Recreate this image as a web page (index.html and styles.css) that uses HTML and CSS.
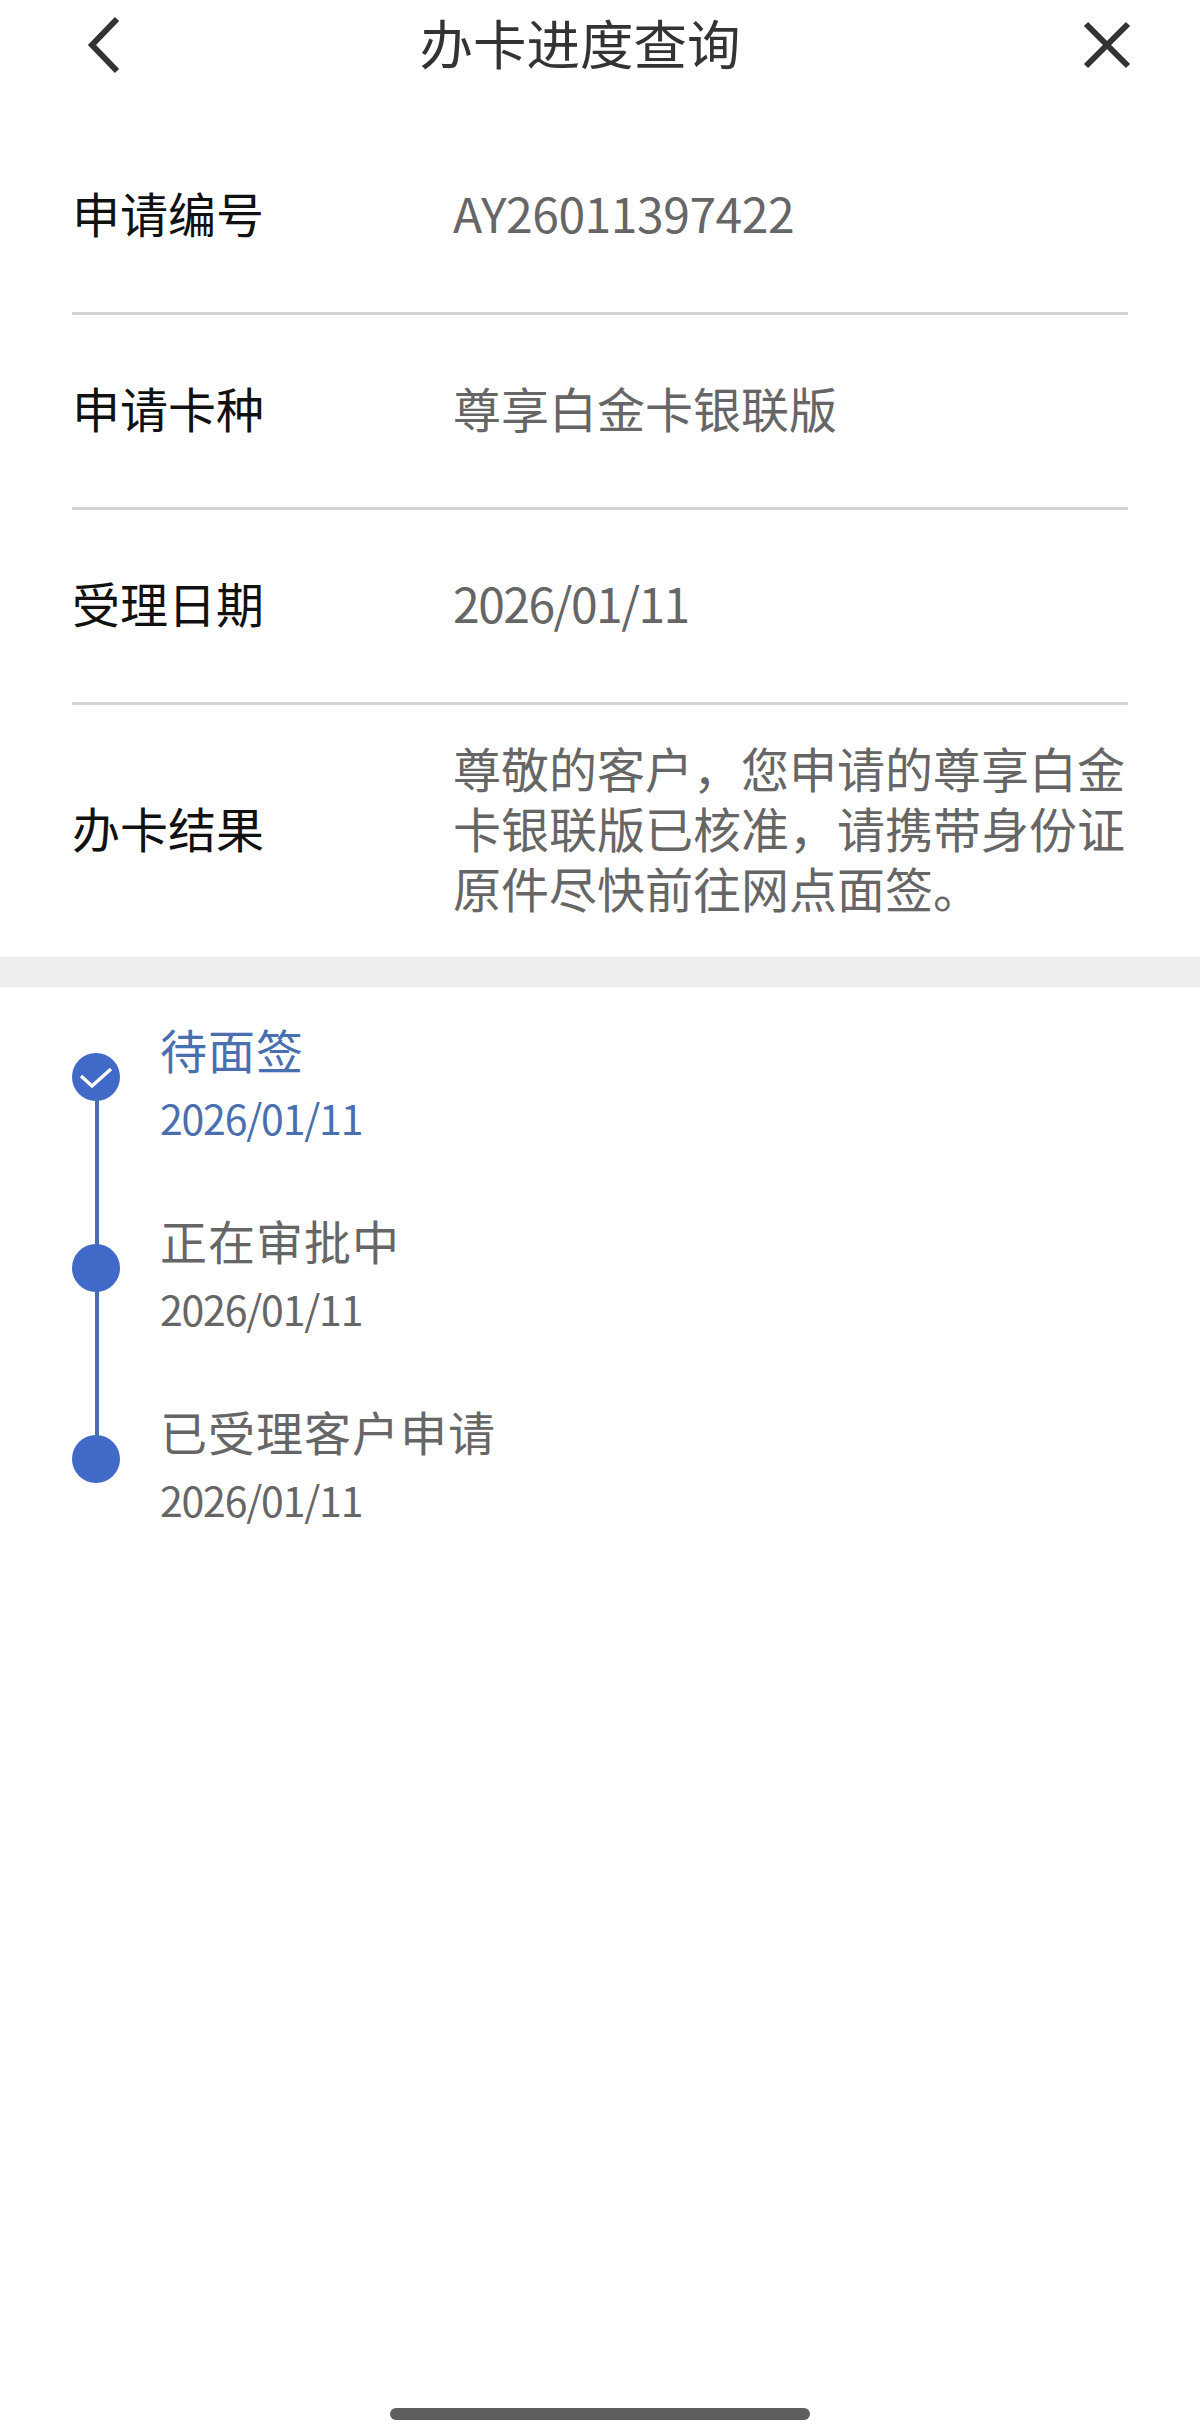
FILE: index.html
```html
<!DOCTYPE html>
<html lang="zh-CN">
<head>
    <meta charset="UTF-8">
    <meta name="viewport" content="width=device-width, initial-scale=1.0">
    <title>办卡进度查询</title>
    <link rel="stylesheet" href="styles.css">
</head>
<body>

<div class="page">
    <header class="navBar">
        <svg class="navIcon" viewBox="0 0 60 60" width="60" height="60" aria-label="返回">
            <path d="M40 4 L15 30 L40 56" fill="none" stroke="#333" stroke-width="6"/>
        </svg>
        <h1 class="navTitle">办卡进度查询</h1>
        <svg class="navIcon" viewBox="0 0 60 60" width="60" height="60" aria-label="关闭">
            <path d="M9 9 L51 51 M51 9 L9 51" fill="none" stroke="#333" stroke-width="6"/>
        </svg>
    </header>

    <section class="details">
        <div class="row">
            <div class="rowLabel">申请编号</div>
            <div class="rowValue rowCode">AY26011397422</div>
        </div>
        <div class="row">
            <div class="rowLabel">申请卡种</div>
            <div class="rowValue">尊享白金卡银联版</div>
        </div>
        <div class="row">
            <div class="rowLabel">受理日期</div>
            <div class="rowValue rowDate">2026/01/11</div>
        </div>
        <div class="row rowLast">
            <div class="rowLabel">办卡结果</div>
            <div class="rowValue">尊敬的客户，您申请的尊享白金卡银联版已核准，请携带身份证原件尽快前往网点面签。</div>
        </div>
    </section>

    <div class="band"></div>

    <section class="timeline">
        <div class="step stepActive">
            <div class="stepDot">
                <svg viewBox="0 0 48 48" width="48" height="48">
                    <path d="M9 23 L20 33 L39 16" fill="none" stroke="#fff" stroke-width="3.5"/>
                </svg>
            </div>
            <div class="stepName">待面签</div>
            <div class="stepDate">2026/01/11</div>
        </div>
        <div class="step">
            <div class="stepDot"></div>
            <div class="stepName">正在审批中</div>
            <div class="stepDate">2026/01/11</div>
        </div>
        <div class="step stepLast">
            <div class="stepDot"></div>
            <div class="stepName">已受理客户申请</div>
            <div class="stepDate">2026/01/11</div>
        </div>
    </section>

    <div class="homeBar"></div>
</div>

</body>
</html>
```

FILE: styles.css
```css
body {
    font-family: "Noto Sans CJK SC", "Noto Sans", sans-serif;
    margin: 0;
    padding: 0;
    background-color: #fff;
}

.page {
    width: 1200px;
    height: 2434px;
    display: flex;
    flex-direction: column;
    overflow: hidden;
}

.navBar {
    height: 90px;
    padding: 0 63px 0 77px;
    display: flex;
    align-items: center;
    justify-content: space-between;
}

.navTitle {
    margin: 0 54px 6px 0;
    font-size: 53.5px;
    line-height: 84px;
    font-weight: 400;
    color: #333;
}

.details {
    padding: 30px 72px 0;
}

.row {
    height: 192px;
    display: flex;
    align-items: center;
    border-bottom: 3px solid #d4d4d4;
}

.rowLast {
    height: 252px;
    border-bottom: none;
}

/* text sits a little above the middle of each row */
.rowLabel,
.rowValue {
    margin-bottom: 8px;
}

.rowLabel {
    width: 381px;
    flex-shrink: 0;
    font-size: 48px;
    color: #111;
}

.rowValue {
    font-size: 48px;
    line-height: 60px;
    color: #666;
}

.rowCode {
    letter-spacing: -0.45px;
}

.rowDate {
    letter-spacing: -1.5px;
}

.band {
    height: 30px;
    background-color: #eeeeee;
}

.timeline {
    padding: 30px 0 0 72px;
}

.step {
    position: relative;
    height: 191px;
    padding-left: 88px;
    box-sizing: border-box;
}

/* connector runs from this dot down to the next one */
.step::before {
    content: "";
    position: absolute;
    left: 23px;
    top: 82px;
    width: 4px;
    height: 150px;
    background-color: #4a6fb0;
}

.stepLast::before {
    display: none;
}

.stepDot {
    position: absolute;
    left: 0;
    top: 36px;
    width: 48px;
    height: 48px;
    border-radius: 50%;
    background-color: #4169c8;
}

.stepDot svg {
    display: block;
}

.stepName {
    font-size: 47px;
    line-height: 64px;
    letter-spacing: 1px;
    color: #666;
}

.stepDate {
    font-size: 41px;
    line-height: 72px;
    letter-spacing: -1.2px;
    color: #666;
}

.stepActive .stepName,
.stepActive .stepDate {
    color: #4a6fb0;
}

.homeBar {
    width: 420px;
    height: 12px;
    margin: auto 0 14px 390px;
    border-radius: 6px;
    background-color: #5e5e5e;
}
```
